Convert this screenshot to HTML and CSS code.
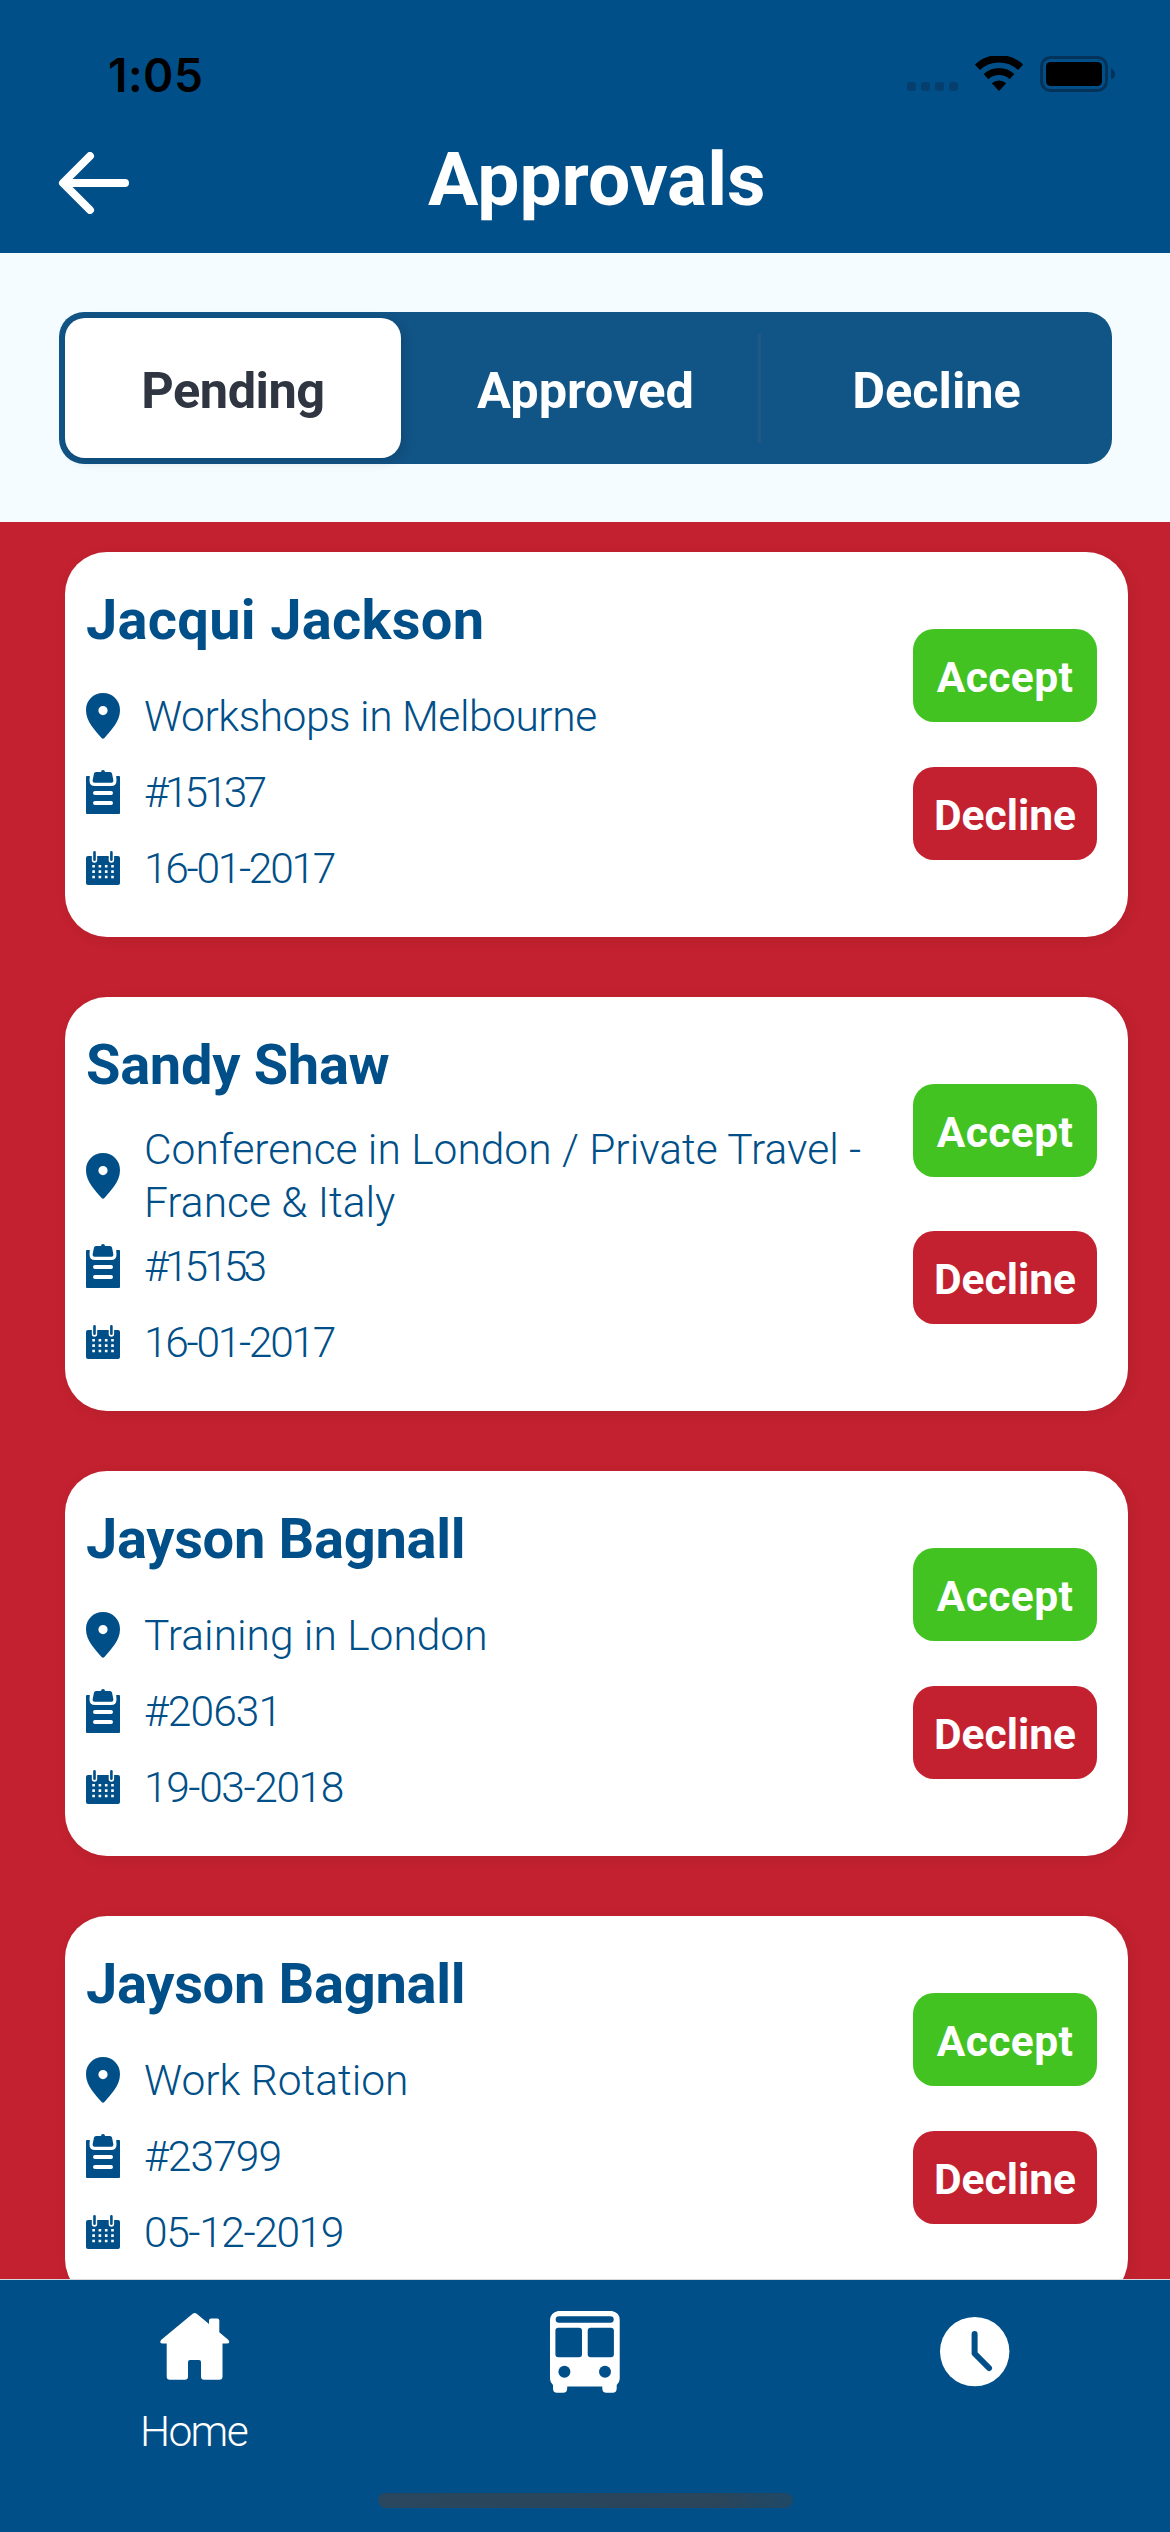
FILE: index.html
```html
<!DOCTYPE html>
<html lang="en">
<head>
<meta charset="utf-8">
<title>Approvals</title>
<link rel="stylesheet" href="styles.css">
</head>
<body>
<svg class="sprite" aria-hidden="true">
  <symbol id="pin" viewBox="0 0 34 46">
    <path fill-rule="evenodd" d="M17 0C7.4 0 0 7.3 0 17.2 0 29 9.500 37.500 15.600 45c.8.9 2 .9 2.800 0C24.500 37.500 34 29 34 17.200 34 7.300 26.600 0 17 0Zm0 13a4.600 4.600 0 1 1 0 9.200 4.600 4.600 0 0 1 0-9.200Z"/>
  </symbol>
  <symbol id="clipboard" viewBox="0 0 34 44">
    <path d="M0 7q0-1 1-1h2.800l-.3 4.500q0 5.500 5.500 5.500h16q5.500 0 5.500-5.500L30.200 6H33q1 0 1 1v36q0 1-1 1H1q-1 0-1-1Z"/>
    <path d="M15 2q0-2 2-2t2 2h5q1.500 0 2 1.600L27.300 10q.4 2.800-2 2.800H8.700q-2.400 0-2-2.800L8 3.600Q8.500 2 10 2Z"/>
    <path d="M9 23h16M9 33h16" stroke="#fff" stroke-width="4" stroke-linecap="round"/>
  </symbol>
  <symbol id="calendar" viewBox="0 0 34 34">
    <rect y="5" width="34" height="29" rx="2"/>
    <path d="M8.500 2v7M25.400 2v7" stroke="#fff" stroke-width="5.400" stroke-linecap="round"/>
    <path d="M8.500 1.300v7.500M25.400 1.300v7.500" stroke="#014f88" stroke-width="2.600" stroke-linecap="round"/>
    <path d="M6.300 15.300h22M6.300 20.600h22M6.300 26h22" stroke="#fff" stroke-width="2.600" stroke-dasharray="2.600 3.700"/>
  </symbol>
</svg>

<div class="screen">
  <header class="header">
    <div class="status">
      <span class="time">1:05</span>
      <div class="status-icons">
        <svg width="52" height="37" viewBox="0 0 52 37"><g fill="#063f6e"><rect y="26" width="9" height="9" rx="3"/><rect x="14" y="26" width="9" height="9" rx="3"/><rect x="28" y="26" width="9" height="9" rx="3"/><rect x="42" y="26" width="9" height="9" rx="3"/></g></svg>
        <svg class="wifi" width="48" height="37" viewBox="0 0 48 37"><g fill="none" stroke="#000"><path stroke-width="7.500" d="M2.400 11.300A31.700 31.700 0 0 1 45.600 11.300"/><path stroke-width="7" d="M11 20.600A19 19 0 0 1 37 20.600"/></g><path d="M16.800 27.300A10.500 10.500 0 0 1 31.200 27.300L24 35Z"/></svg>
        <svg class="battery" width="75" height="37" viewBox="0 0 75 37"><rect x="1.500" y="1.500" width="65" height="33" rx="9" fill="none" stroke="#04335a" stroke-width="3"/><rect x="6" y="6" width="56" height="24" rx="4.500"/><path fill="#04335a" d="M71 12.500Q75 14 75 18T71 23.500Z"/></svg>
      </div>
    </div>
    <div class="header-main">
      <svg class="back" width="72" height="62" viewBox="0 0 72 62"><path fill="none" stroke="#fff" stroke-width="8" stroke-linecap="round" stroke-linejoin="round" d="M32 4 5 31 32 58M6 31H67"/></svg>
      <h1 class="title">Approvals</h1>
    </div>
  </header>

  <div class="filter">
    <div class="segments">
      <div class="segment"><span class="pill">Pending</span></div>
      <div class="segment segment-mid">Approved</div>
      <div class="segment">Decline</div>
    </div>
  </div>

  <main class="list">
    <article class="card">
      <div class="info">
        <h2 class="name wide">Jacqui Jackson</h2>
        <div class="row"><svg class="pin"><use href="#pin"/></svg><span class="tight-0">Workshops in Melbourne</span></div>
        <div class="row"><svg class="clipboard"><use href="#clipboard"/></svg><span class="tight-4">#15137</span></div>
        <div class="row"><svg class="calendar"><use href="#calendar"/></svg><span class="tight-3">16-01-2017</span></div>
      </div>
      <div class="actions"><button class="btn accept">Accept</button><button class="btn decline">Decline</button></div>
    </article>
    <article class="card">
      <div class="info">
        <h2 class="name">Sandy Shaw</h2>
        <div class="row"><svg class="pin"><use href="#pin"/></svg><span>Conference in London / Private Travel -<br>France &amp; Italy</span></div>
        <div class="row"><svg class="clipboard"><use href="#clipboard"/></svg><span class="tight-4">#15153</span></div>
        <div class="row"><svg class="calendar"><use href="#calendar"/></svg><span class="tight-3">16-01-2017</span></div>
      </div>
      <div class="actions"><button class="btn accept">Accept</button><button class="btn decline">Decline</button></div>
    </article>
    <article class="card">
      <div class="info">
        <h2 class="name">Jayson Bagnall</h2>
        <div class="row"><svg class="pin"><use href="#pin"/></svg><span>Training in London</span></div>
        <div class="row"><svg class="clipboard"><use href="#clipboard"/></svg><span class="tight-1">#20631</span></div>
        <div class="row"><svg class="calendar"><use href="#calendar"/></svg><span class="tight-2">19-03-2018</span></div>
      </div>
      <div class="actions"><button class="btn accept">Accept</button><button class="btn decline">Decline</button></div>
    </article>
    <article class="card">
      <div class="info">
        <h2 class="name">Jayson Bagnall</h2>
        <div class="row"><svg class="pin"><use href="#pin"/></svg><span>Work Rotation</span></div>
        <div class="row"><svg class="clipboard"><use href="#clipboard"/></svg><span class="tight-1">#23799</span></div>
        <div class="row"><svg class="calendar"><use href="#calendar"/></svg><span class="tight-2">05-12-2019</span></div>
      </div>
      <div class="actions"><button class="btn accept">Accept</button><button class="btn decline">Decline</button></div>
    </article>
  </main>

  <nav class="tabbar">
    <div class="tab">
      <svg width="72" height="82" viewBox="0 0 72 82"><path fill="#fff" d="M33.700 2.800Q35.700 1.200 37.700 2.800L50 12.900V9.500Q50 7.500 52 7.500H58.300Q60.300 7.500 60.300 9.500V21.200L69.500 29Q71.500 32.500 68 32.500H63.500V65.500Q63.500 68.700 60.300 68.700H45.200Q42 68.700 42 65.500V51Q42 49 40 49H31Q29 49 29 51V65.500Q29 68.700 25.800 68.700H10.900Q7.700 68.700 7.700 65.500V32.500H3.500Q0 32.500 2 29Z"/></svg>
      <span class="tab-label">Home</span>
    </div>
    <div class="tab">
      <svg width="72" height="82" viewBox="0 0 72 82"><path fill="#fff" d="M9 0H63Q70.700 1.500 70.700 9V68Q70.700 71 67.700 74V77.500Q67.700 81.700 63.500 81.700H57.500Q53.300 81.700 53.300 77.500V75.500H18.200V77.500Q18.200 81.700 14 81.700H8Q4 81.700 4 77.500V74Q1 71 1 68V9Q1.500 1.500 9 0Z"/><g fill="#014f88"><rect x="6.700" y="5.200" width="58" height="6.600" rx="3.300"/><rect x="6.400" y="16.700" width="26.600" height="29.600" rx="3"/><rect x="38.700" y="16.700" width="26.200" height="29.600" rx="3"/><circle cx="15.400" cy="60.700" r="6"/><circle cx="56" cy="60.700" r="6"/></g></svg>
    </div>
    <div class="tab">
      <svg width="72" height="82" viewBox="0 0 72 82"><circle cx="35.700" cy="40.600" r="34.700" fill="#fff"/><path fill="none" stroke="#014f88" stroke-width="6" stroke-linecap="round" stroke-linejoin="round" d="M35.600 23V42.500L50 57"/></svg>
    </div>
    <div class="home-indicator"></div>
  </nav>
</div>
</body>
</html>
```
FILE: styles.css
```css
* { box-sizing: border-box; }

body {
  margin: 0;
  font-family: Roboto, "Liberation Sans", sans-serif;
}

svg { display: block; flex: none; }
.sprite { position: absolute; width: 0; height: 0; }

.screen {
  width: 1170px;
  height: 2532px;
  display: flex;
  flex-direction: column;
  overflow: hidden;
  background: #c3212f;
}

/* Header */
.header { height: 253px; flex: none; background: #014f88; }
.status {
  height: 149px;
  padding: 0 55px 0 108px;
  display: flex;
  align-items: center;
  justify-content: space-between;
}
.time { font: 600 46px/54px Inter, sans-serif; letter-spacing: .5px; color: #000; }
.status-icons { display: flex; }
.wifi { margin-left: 16px; }
.battery { margin-left: 17px; }
.header-main { height: 68px; padding-left: 58px; display: flex; align-items: center; }
.title {
  margin: -9px 0 0 298px;
  font-size: 75px;
  line-height: 68px;
  font-weight: 700;
  color: #fff;
}

/* Segmented filter */
.filter { height: 269px; flex: none; padding: 59px 58px 0 59px; background: #f4fcff; }
.segments {
  height: 152px;
  display: grid;
  grid-template-columns: repeat(3, 1fr);
  border-radius: 25px;
  background: #115486;
  color: #fff;
  font-size: 50.500px;
  font-weight: 700;
}
.segment { display: flex; align-items: center; justify-content: center; padding-top: 4px; position: relative; }
.segment:first-child { padding: 6px 9px 6px 6px; }
.segment-mid::after {
  content: "";
  position: absolute;
  right: 0;
  top: 21px;
  width: 3px;
  height: 110px;
  border-radius: 2px;
  background: #225984;
}
.pill {
  flex: 1;
  align-self: stretch;
  display: flex;
  align-items: center;
  justify-content: center;
  padding-top: 4px;
  border-radius: 20px;
  background: #fff;
  color: #2f3641;
  letter-spacing: -.5px;
  box-shadow: 3px 3px 12px rgba(0, 0, 0, .14);
}

/* Approval cards */
.list { flex: 1; min-height: 0; overflow: hidden; padding: 30px 42px 0 65px; }
.card {
  display: flex;
  justify-content: space-between;
  margin-bottom: 60px;
  padding: 0 31px 31px 21px;
  border-radius: 42px;
  background: #fff;
  box-shadow: 3px 3px 14px rgba(0, 0, 0, .07);
}
.name {
  margin: 0;
  padding: 12px 0 2px;
  font-size: 56px;
  line-height: 112px;
  letter-spacing: -.3px;
  color: #014f88;
}
.wide { letter-spacing: .3px; }
.row {
  min-height: 76px;
  display: flex;
  align-items: center;
  gap: 24px;
  color: #014f88;
  fill: #014f88;
  font-size: 42.500px;
  line-height: 52.500px;
  font-weight: 300;
}
.row span { margin: 1px 0 -1px; }
.pin { width: 34px; height: 46px; }
.clipboard { width: 34px; height: 44px; }
.calendar { width: 34px; height: 34px; }
.tight-0 { letter-spacing: -.450px; }
.tight-1 { letter-spacing: -.900px; }
.tight-2 { letter-spacing: -1.400px; }
.tight-3 { letter-spacing: -2.300px; }
.tight-4 { letter-spacing: -3.900px; }

.actions {
  margin-bottom: -31px;
  padding: 32px 0;
  display: flex;
  flex-direction: column;
  justify-content: space-evenly;
}
.btn {
  width: 184px;
  height: 93px;
  padding: 5px 0 0;
  border: 0;
  border-radius: 21px;
  font: 700 42.500px/52px Roboto, sans-serif;
  color: #fff;
}
.accept { background: #42c322; letter-spacing: .4px; }
.decline { background: #c3212f; }

/* Bottom navigation */
.tabbar {
  position: relative;
  height: 253px;
  flex: none;
  display: grid;
  grid-template-columns: repeat(3, 1fr);
  border-top: 1px solid #d4d8da;
  background: #014f88;
}
.tab { display: flex; flex-direction: column; align-items: center; padding-top: 31px; }
.tab-label {
  margin: 13px 3px 0 0;
  font-size: 42.500px;
  line-height: 52px;
  font-weight: 300;
  letter-spacing: -1.600px;
  color: #fff;
}
.home-indicator {
  position: absolute;
  left: 378px;
  bottom: 24px;
  width: 415px;
  height: 15px;
  border-radius: 8px;
  background: linear-gradient(90deg, #29475e, #2b455a 80%, #1f4967);
}
```
